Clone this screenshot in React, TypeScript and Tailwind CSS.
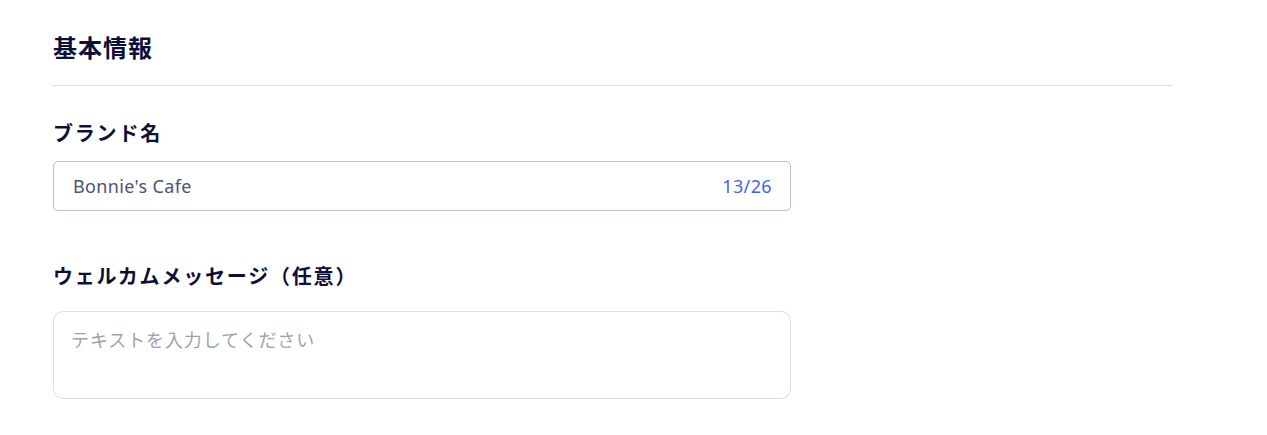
export default function App() {
  return (
    <div
      className="min-h-screen bg-white pl-[53px] pr-[94px] pt-[30px]"
      style={{ fontFamily: '"Noto Sans", "Noto Sans CJK JP", sans-serif' }}
    >
      <h2 className="text-[24px] font-bold leading-[36px] tracking-[0.04em] text-[#0c1038]">基本情報</h2>
      <div className="mt-[19px] h-px w-[1120px] bg-[#dcdde3]" />

      <div className="mt-[34px] w-[738px]">
        <label className="block text-[20px] font-bold leading-[28px] tracking-[0.09em] text-[#0c1038]">
          ブランド名
        </label>
        <div className="mt-[13px] flex h-[50px] items-center justify-between rounded-[5px] border border-[#b9bccb] pl-[19px] pr-[18px]">
          <span className="text-[18px] tracking-[0.02em] text-[#4b5373]">Bonnie's Cafe</span>
          <span className="text-[18px] tracking-[0.02em] text-[#4461f7]">13/26</span>
        </div>

        <label className="mt-[52px] block text-[20px] font-bold leading-[28px] tracking-[0.09em] text-[#0c1038]">
          ウェルカムメッセージ（任意）
        </label>
        <div className="mt-[20px] h-[88px] rounded-[10px] border border-[#dcdde3] px-[17px] pt-[15px]">
          <span className="text-[18px] leading-[27px] tracking-[0.05em] text-[#9ca3af]">テキストを入力してください</span>
        </div>
      </div>
    </div>
  );
}
